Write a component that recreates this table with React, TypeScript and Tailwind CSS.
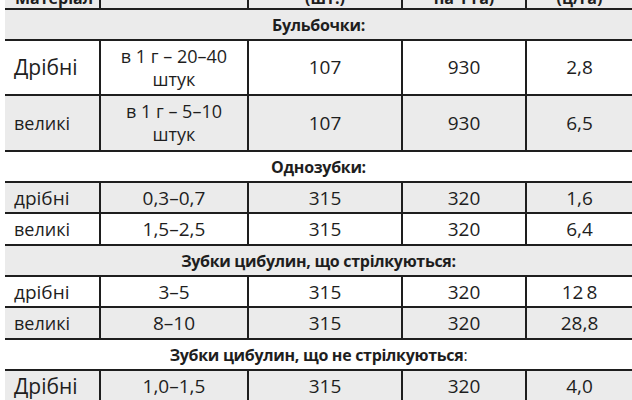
import React from "react";

const font = { fontFamily: '"Open Sans", "Noto Sans", sans-serif' };

type Row =
  | { kind: "head"; text: string; colon?: boolean; h: string; gray: boolean }
  | { kind: "data"; cells: string[]; h: string; gray: boolean; first: string; two?: boolean };

const rows: Row[] = [
  { kind: "head", text: "Бульбочки:", h: "h-[31px]", gray: true },
  { kind: "data", cells: ["Дрібні", "в 1 г – 20–40|штук", "107", "930", "2,8"], h: "h-[55px]", gray: false, first: "text-[21px]", two: true },
  { kind: "data", cells: ["великі", "в 1 г – 5–10|штук", "107", "930", "6,5"], h: "h-[56px]", gray: true, first: "text-[18px]", two: true },
  { kind: "head", text: "Однозубки:", h: "h-[31px]", gray: false },
  { kind: "data", cells: ["дрібні", "0,3–0,7", "315", "320", "1,6"], h: "h-[31px]", gray: true, first: "text-[19px]" },
  { kind: "data", cells: ["великі", "1,5–2,5", "315", "320", "6,4"], h: "h-[32px]", gray: false, first: "text-[18px]" },
  { kind: "head", text: "Зубки цибулин, що стрілкуються:", h: "h-[31px]", gray: true },
  { kind: "data", cells: ["дрібні", "3–5", "315", "320", "12\u20098"], h: "h-[31px]", gray: false, first: "text-[19px]" },
  { kind: "data", cells: ["великі", "8–10", "315", "320", "28,8"], h: "h-[32px]", gray: true, first: "text-[18px]" },
  { kind: "head", text: "Зубки цибулин, що не стрілкуються", colon: true, h: "h-[31px]", gray: false },
  { kind: "data", cells: ["Дрібні", "1,0–1,5", "315", "320", "4,0"], h: "h-[31px]", gray: true, first: "text-[21px]" },
];

export default function App() {
  return (
    <div className="w-[632px] h-[400px] overflow-hidden bg-white text-[#1e1e1e]" style={font}>
      <div className="ml-[5px] -mt-[20px] grid grid-cols-[96px_148px_154px_124px_105px]">
        {["Матеріал", "", "(шт.)", "на 1 га)", "(ц/га)"].map((t, i) => (
          <div
            key={"h" + i}
            className={
              "h-[30px] bg-[#ebebeb] border-b-2 border-[#1e1e1e] flex items-end pb-[1px] text-[16px] font-bold leading-[18px] " +
              (i < 4 ? "border-r-2 " : "") +
              (i === 0 ? "justify-start pl-[10px]" : "justify-center")
            }
          >
            {t}
          </div>
        ))}
        {rows.map((r, idx) =>
          r.kind === "head" ? (
            <div
              key={idx}
              className={
                "col-span-5 border-b-2 border-[#1e1e1e] flex items-center justify-center text-[16px] font-bold tracking-[-0.3px] " +
                r.h +
                " " +
                (r.gray ? "bg-[#ebebeb]" : "bg-white")
              }
            >
              {r.text}
              {r.colon ? <span className="font-normal">:</span> : null}
            </div>
          ) : (
            r.cells.map((c, i) => (
              <div
                key={idx + "-" + i}
                className={
                  "border-b-2 border-[#1e1e1e] flex flex-col justify-center " +
                  r.h +
                  " " +
                  (i < 4 ? "border-r-2 " : "") +
                  (r.gray ? "bg-[#ebebeb] " : "bg-white ") +
                  (i === 0 ? "items-start pl-[9px] " + r.first : "items-center " + (r.two && i === 1 ? "text-[18px]" : "text-[19px]"))
                }
              >
                {c.split("|").map((line, k) => (
                  <span key={k} className={r.two ? "leading-[23px]" : "leading-[24px]"}>
                    {line}
                  </span>
                ))}
              </div>
            ))
          )
        )}
      </div>
    </div>
  );
}
